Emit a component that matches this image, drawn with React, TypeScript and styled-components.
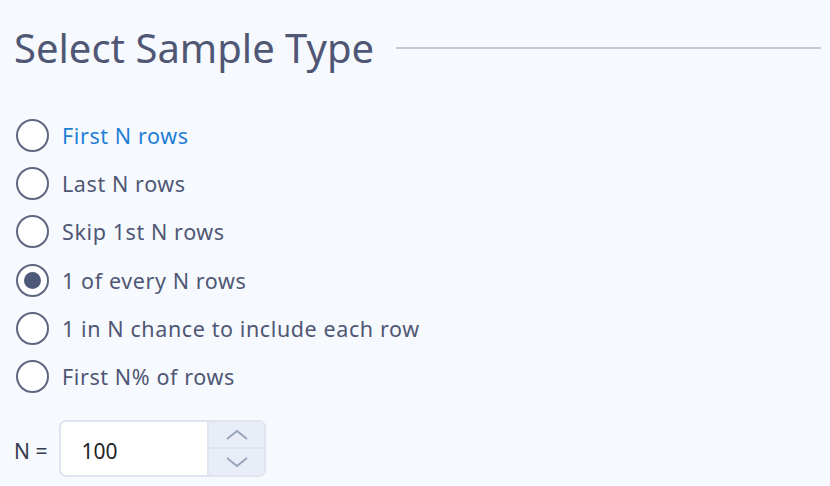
import React, { useState } from "react";
import styled, { createGlobalStyle } from "styled-components";

const Global = createGlobalStyle`
  html, body { margin: 0; padding: 0; background: #f6f9fe; }
  body { font-family: "Noto Sans", "Open Sans", sans-serif; }
`;

const Page = styled.div`
  width: 830px;
  height: 486px;
  box-sizing: border-box;
  padding: 22px 9px 0 14px;
  background: #f6f9fe;
  overflow: hidden;
`;

const Header = styled.div`
  display: flex;
  align-items: center;
  gap: 22px;
  height: 52px;
`;

const Title = styled.h1`
  margin: 0;
  font-size: 40px;
  font-weight: 400;
  color: #4f5775;
  line-height: 52px;
  white-space: nowrap;
`;

const Rule = styled.div`
  flex: 1;
  height: 2px;
  background: #c9cacf;
`;

const List = styled.div`
  display: flex;
  flex-direction: column;
  margin-top: 37px;
`;

const Option = styled.label<{ $active?: boolean }>`
  display: flex;
  align-items: center;
  gap: 13px;
  height: 48.3px;
  padding-left: 2px;
  font-size: 21.5px;
  letter-spacing: 0.6px;
  color: ${(p) => (p.$active ? "#1f7fd6" : "#4f5775")};
  cursor: pointer;
`;

const Circle = styled.span<{ $checked?: boolean }>`
  box-sizing: border-box;
  width: 33px;
  height: 33px;
  border-radius: 50%;
  border: 2px solid #5e6680;
  background: #ffffff;
  display: flex;
  align-items: center;
  justify-content: center;
  &::after {
    content: "";
    width: 17px;
    height: 17px;
    border-radius: 50%;
    background: #4f5a7a;
    display: ${(p) => (p.$checked ? "block" : "none")};
  }
`;

const NRow = styled.div`
  display: flex;
  align-items: center;
  gap: 12px;
  margin-top: 19px;
`;

const NLabel = styled.span`
  font-size: 21px;
  color: #353b50;
  padding-top: 6px;
`;

const Spin = styled.div`
  display: flex;
  width: 207px;
  height: 57px;
  box-sizing: border-box;
  border: 2px solid #dfe4ee;
  border-radius: 7px;
  background: #ffffff;
  overflow: hidden;
`;

const Value = styled.input`
  flex: 1;
  min-width: 0;
  border: none;
  outline: none;
  background: transparent;
  padding: 6px 0 0 20px;
  font-family: "Noto Sans", sans-serif;
  font-size: 21px;
  color: #222222;
`;

const Buttons = styled.div`
  width: 55px;
  display: flex;
  flex-direction: column;
  border-left: 2px solid #dfe4ee;
  background: #e8edf7;
`;

const Btn = styled.button<{ $top?: boolean }>`
  flex: 1;
  border: none;
  background: transparent;
  padding: 0;
  display: flex;
  align-items: center;
  justify-content: center;
  border-bottom: ${(p) => (p.$top ? "2px solid #dfe4ee" : "none")};
  cursor: pointer;
`;

const Chevron = ({ up }: { up?: boolean }) => (
  <svg width="26" height="14" viewBox="0 0 26 14">
    <path
      d={up ? "M3 11 L13 3 L23 11" : "M3 3 L13 11 L23 3"}
      fill="none"
      stroke="#98a3bb"
      strokeWidth="1.8"
    />
  </svg>
);

const options = [
  "First N rows",
  "Last N rows",
  "Skip 1st N rows",
  "1 of every N rows",
  "1 in N chance to include each row",
  "First N% of rows",
];

export default function App() {
  const [sel, setSel] = useState(3);
  const [n, setN] = useState("100");
  return (
    <Page>
      <Global />
      <Header>
        <Title>Select Sample Type</Title>
        <Rule />
      </Header>
      <List>
        {options.map((o, i) => (
          <Option key={o} $active={i === 0} onClick={() => setSel(i)}>
            <Circle $checked={sel === i} />
            {o}
          </Option>
        ))}
      </List>
      <NRow>
        <NLabel>N =</NLabel>
        <Spin>
          <Value value={n} onChange={(e) => setN(e.target.value)} />
          <Buttons>
            <Btn $top onClick={() => setN(String(Number(n) + 1))}>
              <Chevron up />
            </Btn>
            <Btn onClick={() => setN(String(Number(n) - 1))}>
              <Chevron />
            </Btn>
          </Buttons>
        </Spin>
      </NRow>
    </Page>
  );
}
